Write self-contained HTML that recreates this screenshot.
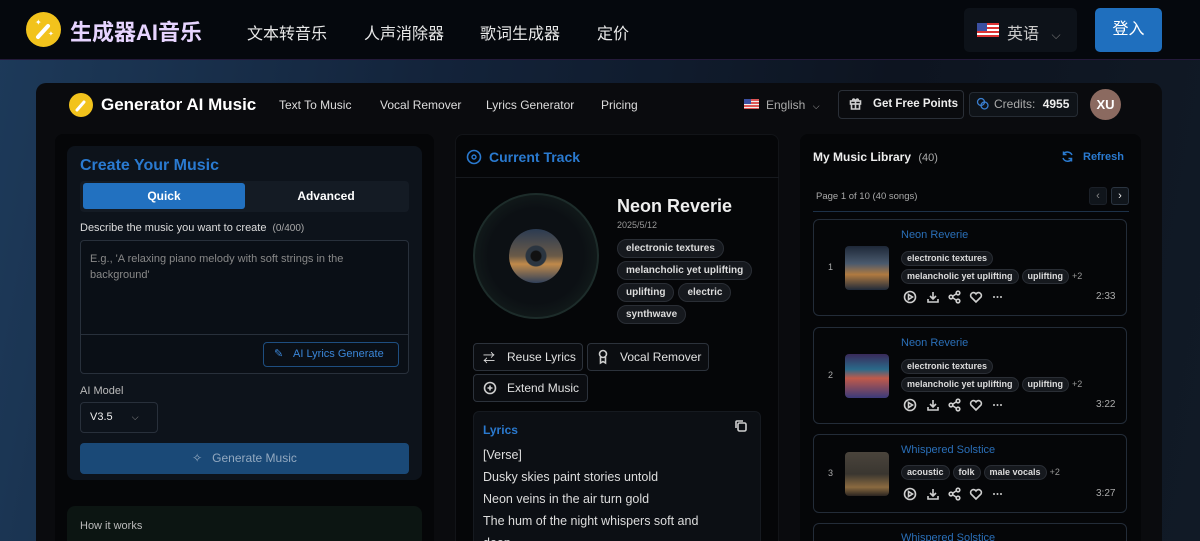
<!DOCTYPE html>
<html><head><meta charset="utf-8"><style>
*{margin:0;padding:0;box-sizing:border-box}
html,body{width:1200px;height:541px;overflow:hidden}
body{background:linear-gradient(100deg,#1d3a5a 0%,#13233a 35%,#0d1420 70%,#111a26 100%);font-family:"Liberation Sans","Noto Sans CJK SC",sans-serif;color:#e6e6e6;position:relative}
.a{position:absolute}
.hdr{left:0;top:0;width:1200px;height:60px;background:#05080d;border-bottom:1px solid #241a3a}
.cn{font-size:16px;color:#e8e8e8;top:20px}
.app{left:36px;top:83px;width:1126px;height:458px;background:#0a0b0e;border-radius:10px 10px 0 0}
.col{background:#050608;border-radius:8px}
.tag{display:inline-block;border:1px solid #2a2e35;background:#16191e;border-radius:10px;font-size:10px;font-weight:bold;color:#dcdcdc;padding:2px 8px;line-height:13px;margin-right:4px}
.lt{display:inline-block;border:1px solid #2a2e35;background:#16191e;border-radius:8px;font-size:9px;font-weight:bold;color:#dcdcdc;padding:1px 5px;line-height:11px;margin-right:3px}
.btn{border:1px solid #2c323b;border-radius:4px;background:#0b0d11;font-size:12px;color:#e0e0e0;height:28px;line-height:26px;padding-left:10px}
.card{left:813px;width:314px;border:1px solid #232c38;border-radius:6px;background:#050608}
.ic{stroke:#cfcfcf;fill:none;stroke-width:1.6}
</style></head><body>
<div class="a hdr"></div>
<div class="a" style="left:26px;top:12px;width:35px;height:35px;border-radius:50%;background:#f2c31c"></div>
<svg class="a" style="left:26px;top:12px" width="35" height="35"><line x1="12" y1="25" x2="22" y2="14" stroke="#fff" stroke-width="4" stroke-linecap="round"/><text x="9" y="13" fill="#fff" font-size="8">✦</text><text x="22" y="24" fill="#fff" font-size="7">✦</text></svg>
<div class="a" style="left:70px;top:15px;font-size:22px;font-weight:bold;color:#e7d4ff">生成器AI音乐</div>
<div class="a cn" style="left:247px">文本转音乐</div>
<div class="a cn" style="left:364px">人声消除器</div>
<div class="a cn" style="left:480px">歌词生成器</div>
<div class="a cn" style="left:597px">定价</div>
<div class="a" style="left:964px;top:8px;width:113px;height:44px;background:#0d1219;border-radius:5px"></div>
<div class="a" style="left:977px;top:23px;width:22px;height:14px;background:repeating-linear-gradient(#d33 0 2px,#fff 2px 4px)"><div style="width:10px;height:8px;background:#3b4fa0"></div></div>
<div class="a" style="left:1007px;top:20px;font-size:16px;color:#ccc">英语 <span style="color:#777;font-size:12px;margin-left:8px">⌵</span></div>
<div class="a" style="left:1095px;top:8px;width:67px;height:44px;background:#1f6fbe;border-radius:5px;color:#fff;font-size:16px;text-align:center;line-height:44px">登入</div>

<div class="a app"></div>
<div class="a" style="left:69px;top:93px;width:24px;height:24px;border-radius:50%;background:#f2c31c"></div>
<svg class="a" style="left:69px;top:93px" width="24" height="24"><line x1="8" y1="17" x2="15" y2="9" stroke="#fff" stroke-width="3" stroke-linecap="round"/></svg>
<div class="a" style="left:101px;top:95px;font-size:17px;font-weight:bold;color:#fff">Generator AI Music</div>
<div class="a" style="left:279px;top:98px;font-size:12px;color:#ddd">Text To Music</div>
<div class="a" style="left:380px;top:98px;font-size:12px;color:#ddd">Vocal Remover</div>
<div class="a" style="left:486px;top:98px;font-size:12px;color:#ddd">Lyrics Generator</div>
<div class="a" style="left:601px;top:98px;font-size:12px;color:#ddd">Pricing</div>
<div class="a" style="left:744px;top:99px;width:15px;height:10px;background:repeating-linear-gradient(#d55 0 2px,#eee 2px 3px)"><div style="width:7px;height:5px;background:#3b4fa0"></div></div>
<div class="a" style="left:766px;top:98px;font-size:12px;color:#aaa">English <span style="font-size:9px;margin-left:4px">⌵</span></div>
<div class="a" style="left:838px;top:90px;width:126px;height:29px;border:1px solid #2a2f37;border-radius:4px;font-size:11.5px;font-weight:bold;color:#eee;line-height:27px;padding-left:34px;white-space:nowrap">Get Free Points</div>
<svg class="a" style="left:849px;top:97px" width="13" height="13"><g class="ic" stroke-width="1.2"><rect x="1.5" y="4" width="10" height="3"/><path d="M2.5 7v5h8V7M6.5 4v8M6.5 4C5 1 3 2 4 4M6.5 4C8 1 10 2 9 4"/></g></svg>
<div class="a" style="left:969px;top:92px;width:109px;height:25px;border:1px solid #252b33;background:#0f1318;border-radius:4px;font-size:12px;color:#aaa;line-height:23px;padding-left:24px">Credits: <b style="color:#eee;margin-left:4px">4955</b></div>
<svg class="a" style="left:976px;top:97px" width="13" height="13"><circle cx="5" cy="5" r="3.5" stroke="#3a7fd0" stroke-width="1.3" fill="none"/><circle cx="8.5" cy="8.5" r="3.5" stroke="#3a7fd0" stroke-width="1.3" fill="none"/></svg>
<div class="a" style="left:1090px;top:89px;width:31px;height:31px;border-radius:50%;background:#8b6a60;color:#fff;font-weight:bold;font-size:13px;text-align:center;line-height:31px">XU</div>

<!-- left column -->
<div class="a col" style="left:55px;top:134px;width:379px;height:420px"></div>
<div class="a" style="left:67px;top:146px;width:355px;height:334px;background:#0d131b;border-radius:8px"></div>
<div class="a" style="left:80px;top:157px;font-size:16px;font-weight:bold;color:#2a7ad0">Create Your Music</div>
<div class="a" style="left:80px;top:181px;width:329px;height:31px;background:#141b24;border-radius:4px"></div>
<div class="a" style="left:83px;top:183px;width:162px;height:26px;background:#2271c0;border-radius:3px;text-align:center;line-height:26px;font-size:12px;font-weight:bold;color:#fff">Quick</div>
<div class="a" style="left:245px;top:183px;width:162px;height:26px;text-align:center;line-height:26px;font-size:12px;font-weight:bold;color:#fff">Advanced</div>
<div class="a" style="left:80px;top:222px;font-size:11px;color:#ddd">Describe the music you want to create <span style="color:#aaa;font-size:10px;margin-left:3px">(0/400)</span></div>
<div class="a" style="left:80px;top:240px;width:329px;height:134px;border:1px solid #28303b;border-radius:4px;background:#0a0f16"></div>
<div class="a" style="left:80px;top:334px;width:329px;height:1px;background:#28303b"></div>
<div class="a" style="left:90px;top:251px;width:300px;font-size:11px;color:#888;line-height:16px">E.g., 'A relaxing piano melody with soft strings in the background'</div>
<div class="a" style="left:263px;top:342px;width:136px;height:25px;border:1px solid #1e4e80;border-radius:4px;font-size:11px;color:#3a86d8;line-height:23px;padding-left:29px">AI Lyrics Generate</div>
<div class="a" style="left:274px;top:347px;font-size:11px;color:#3a86d8">✎</div>
<div class="a" style="left:80px;top:385px;font-size:11px;color:#bbb">AI Model</div>
<div class="a" style="left:80px;top:402px;width:78px;height:31px;border:1px solid #28303b;border-radius:4px;font-size:11px;color:#eee;line-height:29px;padding-left:9px">V3.5 <span style="margin-left:16px;color:#999;font-size:9px">⌵</span></div>
<div class="a" style="left:80px;top:443px;width:329px;height:31px;background:#1a4977;border-radius:4px;text-align:center;line-height:31px;font-size:12px;color:#93a9c0">✧&nbsp;&nbsp;&nbsp;Generate Music</div>
<div class="a" style="left:67px;top:506px;width:355px;height:50px;background:#0c1512;border-radius:8px"></div>
<div class="a" style="left:80px;top:520px;font-size:11px;color:#bbb">How it works</div>

<!-- middle -->
<div class="a col" style="left:455px;top:134px;width:324px;height:420px;border:1px solid #121418"></div>
<div class="a" style="left:455px;top:177px;width:324px;height:1px;background:#16191e"></div>
<svg class="a" style="left:466px;top:149px" width="16" height="16"><circle cx="8" cy="8" r="6.5" stroke="#2a7ad0" stroke-width="1.6" fill="none"/><circle cx="8" cy="8" r="2" stroke="#2a7ad0" stroke-width="1.4" fill="none"/></svg>
<div class="a" style="left:489px;top:149px;font-size:14px;font-weight:bold;color:#2a7ad0">Current Track</div>
<div class="a" style="left:473px;top:193px;width:126px;height:126px;border-radius:50%;background:radial-gradient(circle,#0c1014 55%,#131d1c 80%,#1b2a28 100%);border:2px solid #1d2c2a"></div>
<div class="a" style="left:509px;top:229px;width:54px;height:54px;border-radius:50%;background:radial-gradient(circle at 50% 50%,#111 0 5px,#2b3540 6px 10px,transparent 11px),linear-gradient(#2b3b52 0%,#6a5a48 50%,#c08a4a 65%,#30405a 100%)"></div>
<div class="a" style="left:617px;top:196px;font-size:18px;font-weight:bold;color:#eee">Neon Reverie</div>
<div class="a" style="left:617px;top:220px;font-size:9px;color:#999">2025/5/12</div>
<div class="a" style="left:617px;top:236px;width:150px;line-height:22px"><span class="tag">electronic textures</span> <span class="tag">melancholic yet uplifting</span> <span class="tag">uplifting</span><span class="tag">electric</span> <span class="tag">synthwave</span></div>
<div class="a btn" style="left:473px;top:343px;width:110px;padding-left:33px">Reuse Lyrics</div>
<div class="a" style="left:483px;top:349px;font-size:12px;color:#ddd">⇄</div>
<div class="a btn" style="left:587px;top:343px;width:122px;padding-left:32px">Vocal Remover</div>
<svg class="a" style="left:597px;top:349px" width="12" height="16"><g class="ic" stroke-width="1.3"><circle cx="6" cy="5" r="3.5"/><path d="M3.5 8v6l2.5-1.5L8.5 14V8"/></g></svg>
<div class="a btn" style="left:473px;top:374px;width:115px;padding-left:33px">Extend Music</div>
<svg class="a" style="left:483px;top:381px" width="14" height="14"><circle cx="7" cy="7" r="5.5" class="ic"/><path d="M7 4.5v5M4.5 7h5" class="ic"/></svg>
<div class="a" style="left:473px;top:411px;width:288px;height:140px;background:#0c0f14;border:1px solid #161a20;border-radius:6px"></div>
<svg class="a" style="left:734px;top:419px" width="14" height="14"><rect x="4" y="4" width="8" height="8" rx="1.5" class="ic"/><path d="M2 9V3a1 1 0 0 1 1-1h6" class="ic"/></svg>
<div class="a" style="left:483px;top:423px;font-size:12px;font-weight:bold;color:#2a7ad0">Lyrics</div>
<div class="a" style="left:483px;top:444px;font-size:12.5px;color:#ddd;line-height:22px;width:240px">[Verse]<br>Dusky skies paint stories untold<br>Neon veins in the air turn gold<br>The hum of the night whispers soft and deep</div>

<!-- right -->
<div class="a col" style="left:800px;top:134px;width:341px;height:420px"></div>
<div class="a" style="left:813px;top:150px;font-size:12px;font-weight:bold;color:#eee">My Music Library <span style="font-weight:normal;color:#aaa;margin-left:4px;font-size:11px">(40)</span></div>
<svg class="a" style="left:1061px;top:150px" width="13" height="13"><path d="M11 5A5 5 0 0 0 2.5 4M2 8a5 5 0 0 0 8.5 1.5M2.5 1.5V4.5H5.5M10.5 11.5V8.5H7.5" stroke="#2a7ad0" stroke-width="1.5" fill="none"/></svg>
<div class="a" style="left:1083px;top:151px;font-size:11px;font-weight:bold;color:#2a7ad0">Refresh</div>
<div class="a" style="left:816px;top:191px;font-size:9.5px;color:#aaa">Page 1 of 10 (40 songs)</div>
<div class="a" style="left:1089px;top:187px;width:18px;height:18px;background:#10151b;border:1px solid #1b2028;border-radius:3px;color:#888;font-size:11px;text-align:center;line-height:16px">‹</div>
<div class="a" style="left:1111px;top:187px;width:18px;height:18px;background:#10151b;border:1px solid #2a3440;border-radius:3px;color:#eee;font-size:11px;text-align:center;line-height:16px">›</div>
<div class="a" style="left:813px;top:211px;width:316px;height:1px;background:#1d3148"></div>

<div class="a card" style="top:219px;height:97px"></div>
<div class="a card" style="top:327px;height:97px"></div>
<div class="a card" style="top:434px;height:79px"></div>
<div class="a card" style="top:523px;height:40px"></div>
<div class="a" style="left:828px;top:262px;font-size:9px;color:#aaa">1</div>
<div class="a" style="left:828px;top:370px;font-size:9px;color:#aaa">2</div>
<div class="a" style="left:828px;top:468px;font-size:9px;color:#aaa">3</div>
<div class="a" style="left:845px;top:246px;width:44px;height:44px;border-radius:4px;background:linear-gradient(#1e2838 0%,#4a5a6e 40%,#b07a40 65%,#202a3a 100%)"></div>
<div class="a" style="left:845px;top:354px;width:44px;height:44px;border-radius:4px;background:linear-gradient(#3a2a5a 0%,#2a6a8a 35%,#c05a4a 55%,#3a3a7a 100%)"></div>
<div class="a" style="left:845px;top:452px;width:44px;height:44px;border-radius:4px;background:linear-gradient(#4a443c 0%,#3a3630 50%,#8a6a40 80%,#2a2420 100%)"></div>
<div class="a" style="left:901px;top:229px;font-size:11px;color:#2a6fb8">Neon Reverie</div>
<div class="a" style="left:901px;top:248px;width:220px;line-height:18px"><span class="lt">electronic textures</span><br><span class="lt">melancholic yet uplifting</span><span class="lt">uplifting</span><span style="font-size:9px;color:#999">+2</span></div>
<div class="a" style="left:901px;top:337px;font-size:11px;color:#2a6fb8">Neon Reverie</div>
<div class="a" style="left:901px;top:356px;width:220px;line-height:18px"><span class="lt">electronic textures</span><br><span class="lt">melancholic yet uplifting</span><span class="lt">uplifting</span><span style="font-size:9px;color:#999">+2</span></div>
<div class="a" style="left:901px;top:444px;font-size:11px;color:#2a6fb8">Whispered Solstice</div>
<div class="a" style="left:901px;top:462px;width:220px;line-height:18px"><span class="lt">acoustic</span><span class="lt">folk</span><span class="lt">male vocals</span><span style="font-size:9px;color:#999">+2</span></div>
<div class="a" style="left:901px;top:532px;font-size:11px;color:#2a6fb8">Whispered Solstice</div>

<svg class="a" style="left:903px;top:290px" width="110" height="14"><g class="ic" stroke-width="1.2"><circle cx="7" cy="7" r="5.5"/><path d="M5.5 4.5l4 2.5-4 2.5z"/><path d="M30 2v7M27 6l3 3 3-3M25 9v3h10V9"/><circle cx="48" cy="7" r="1.8"/><circle cx="55" cy="3" r="1.8"/><circle cx="55" cy="11" r="1.8"/><path d="M50 6l3-2M50 8l3 2"/><path d="M73 12l-5-5a2.8 2.8 0 0 1 5-3 2.8 2.8 0 0 1 5 3z"/></g><g fill="#cfcfcf"><circle cx="91" cy="7" r="1"/><circle cx="94.5" cy="7" r="1"/><circle cx="98" cy="7" r="1"/></g></svg>
<svg class="a" style="left:903px;top:398px" width="110" height="14"><g class="ic" stroke-width="1.2"><circle cx="7" cy="7" r="5.5"/><path d="M5.5 4.5l4 2.5-4 2.5z"/><path d="M30 2v7M27 6l3 3 3-3M25 9v3h10V9"/><circle cx="48" cy="7" r="1.8"/><circle cx="55" cy="3" r="1.8"/><circle cx="55" cy="11" r="1.8"/><path d="M50 6l3-2M50 8l3 2"/><path d="M73 12l-5-5a2.8 2.8 0 0 1 5-3 2.8 2.8 0 0 1 5 3z"/></g><g fill="#cfcfcf"><circle cx="91" cy="7" r="1"/><circle cx="94.5" cy="7" r="1"/><circle cx="98" cy="7" r="1"/></g></svg>
<svg class="a" style="left:903px;top:487px" width="110" height="14"><g class="ic" stroke-width="1.2"><circle cx="7" cy="7" r="5.5"/><path d="M5.5 4.5l4 2.5-4 2.5z"/><path d="M30 2v7M27 6l3 3 3-3M25 9v3h10V9"/><circle cx="48" cy="7" r="1.8"/><circle cx="55" cy="3" r="1.8"/><circle cx="55" cy="11" r="1.8"/><path d="M50 6l3-2M50 8l3 2"/><path d="M73 12l-5-5a2.8 2.8 0 0 1 5-3 2.8 2.8 0 0 1 5 3z"/></g><g fill="#cfcfcf"><circle cx="91" cy="7" r="1"/><circle cx="94.5" cy="7" r="1"/><circle cx="98" cy="7" r="1"/></g></svg>
<div class="a" style="left:1096px;top:291px;font-size:10px;color:#aaa">2:33</div>
<div class="a" style="left:1096px;top:399px;font-size:10px;color:#aaa">3:22</div>
<div class="a" style="left:1096px;top:488px;font-size:10px;color:#aaa">3:27</div>
</body></html>
